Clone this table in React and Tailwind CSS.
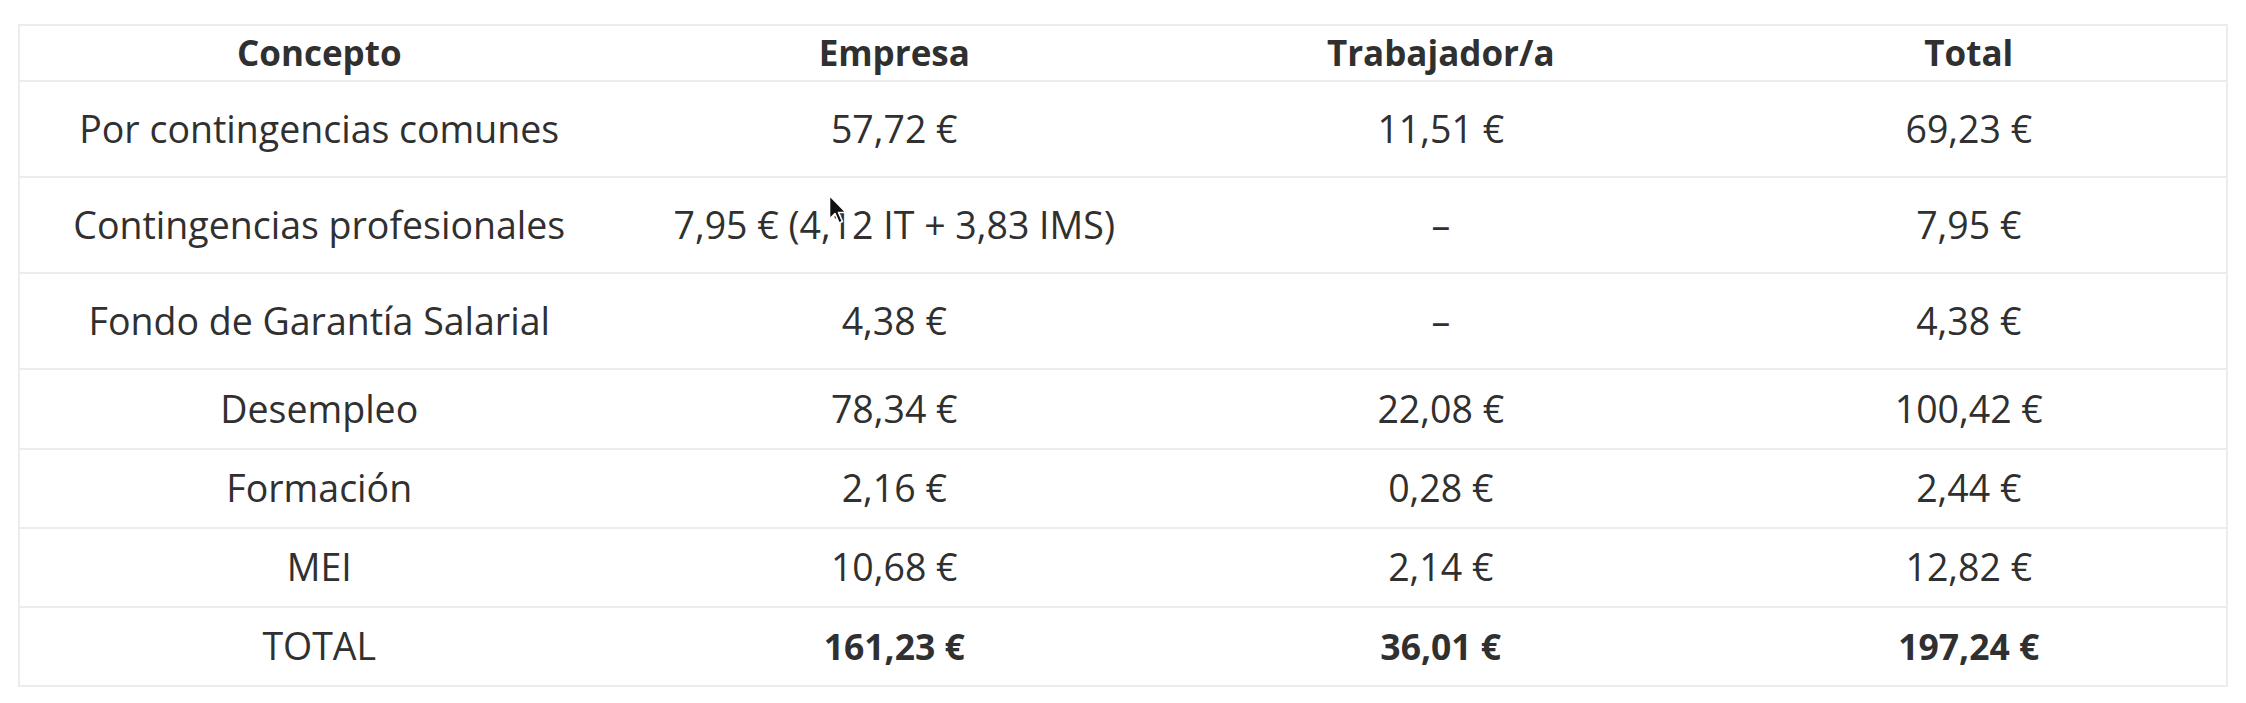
import React from "react";

const rows = [
  { c: "Por contingencias comunes", e: "57,72 €", t: "11,51 €", tot: "69,23 €", h: "h-[96px]" },
  { c: "Contingencias profesionales", e: "7,95 € (4,12 IT + 3,83 IMS)", t: "–", tot: "7,95 €", h: "h-[96px]" },
  { c: "Fondo de Garantía Salarial", e: "4,38 €", t: "–", tot: "4,38 €", h: "h-[96px]" },
  { c: "Desempleo", e: "78,34 €", t: "22,08 €", tot: "100,42 €", h: "h-[80px]" },
  { c: "Formación", e: "2,16 €", t: "0,28 €", tot: "2,44 €", h: "h-[79px]" },
  { c: "MEI", e: "10,68 €", t: "2,14 €", tot: "12,82 €", h: "h-[79px]" },
];

function Cursor() {
  return (
    <svg className="absolute left-[828px] top-[194px] pointer-events-none" width="22" height="32" viewBox="0 0 22 32">
      <path d="M1.5 1.5 L1.5 25 L7 19.5 L11 29 L14.5 27.5 L10.5 18.5 L18 18.5 Z" fill="#111" stroke="#fff" strokeWidth="1.6" strokeLinejoin="round" />
    </svg>
  );
}

export default function App() {
  return (
    <div className="relative w-[2246px] h-[703px] bg-white pt-[24px] pl-[18px] text-[#303030] font-['Open_Sans','Liberation_Sans',sans-serif]">
      <table className="w-[2210px] border-collapse border-2 border-[#ececec] text-[37.5px] leading-[1.3] text-center">
        <colgroup>
          <col className="w-[600px]" />
          <col className="w-[552px]" />
          <col className="w-[542px]" />
          <col className="w-[516px]" />
        </colgroup>
        <thead>
          <tr className="h-[56px] text-[35px]">
            <th className="font-bold border-b-2 border-[#ececec]">Concepto</th>
            <th className="font-bold border-b-2 border-[#ececec]">Empresa</th>
            <th className="font-bold border-b-2 border-[#ececec]">Trabajador/a</th>
            <th className="font-bold border-b-2 border-[#ececec]">Total</th>
          </tr>
        </thead>
        <tbody>
          {rows.map((r) => (
            <tr key={r.c} className={r.h + " border-b-2 border-[#ececec]"}>
              <td>{r.c}</td>
              <td>{r.e}</td>
              <td>{r.t}</td>
              <td>{r.tot}</td>
            </tr>
          ))}
          <tr className="h-[79px]">
            <td>TOTAL</td>
            <td className="font-bold text-[35.5px]">161,23 €</td>
            <td className="font-bold text-[35.5px]">36,01 €</td>
            <td className="font-bold text-[35.5px]">197,24 €</td>
          </tr>
        </tbody>
      </table>
      <Cursor />
    </div>
  );
}
